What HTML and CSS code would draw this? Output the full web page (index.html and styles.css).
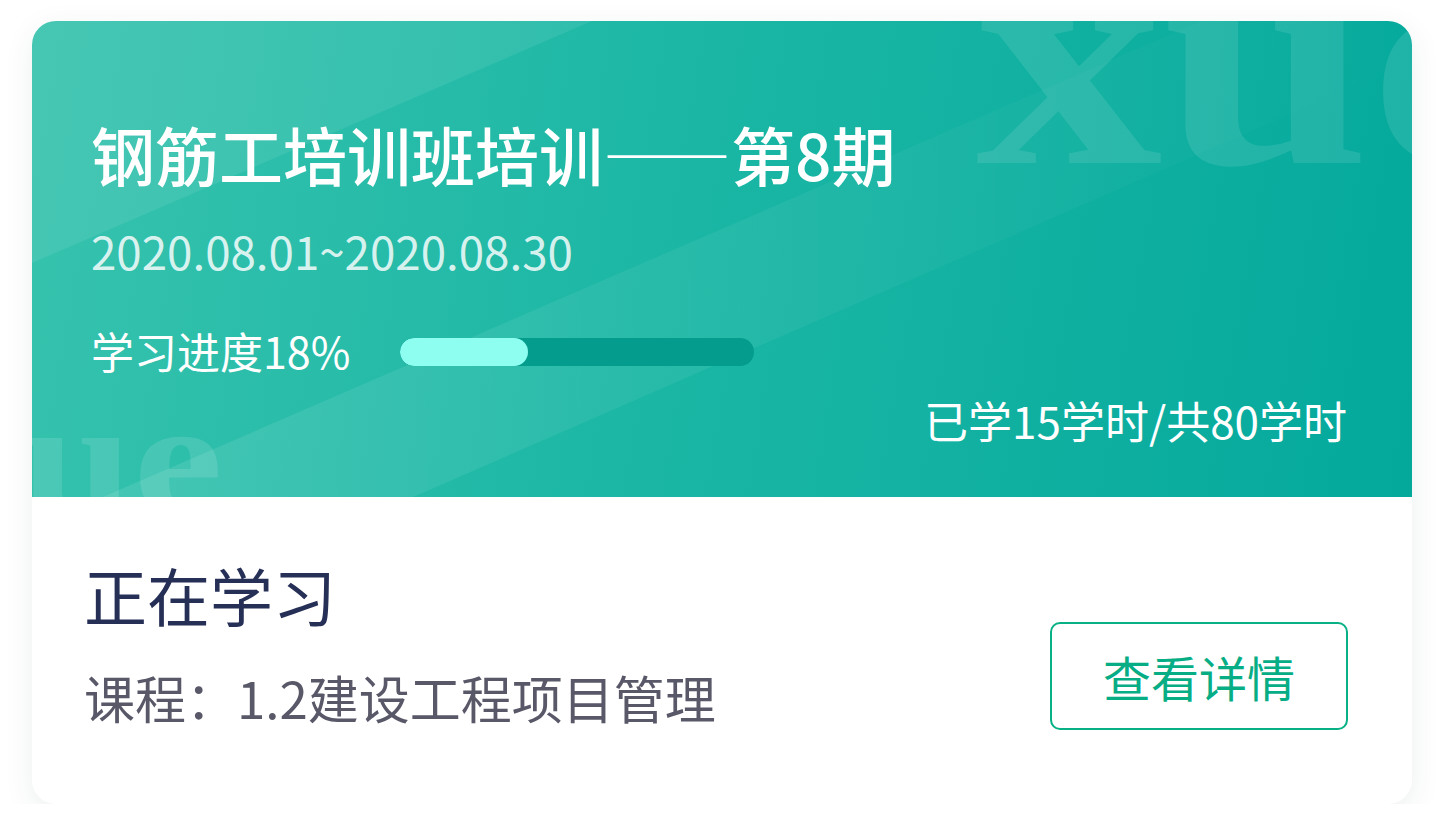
FILE: index.html
```html
<!DOCTYPE html>
<html lang="zh-CN">
<head>
<meta charset="utf-8">
<title>培训班</title>
<link rel="stylesheet" href="styles.css">
</head>
<body>
<div class="card">
  <div class="hero">
    <svg class="hero-bg" viewBox="0 0 1380 476" preserveAspectRatio="none" aria-hidden="true">
      <defs>
        <linearGradient id="band" x1="0" y1="0" x2="1" y2="0">
          <stop offset="0" stop-color="#ffffff" stop-opacity="0.1"/>
          <stop offset="0.5" stop-color="#ffffff" stop-opacity="0.05"/>
          <stop offset="1" stop-color="#ffffff" stop-opacity="0"/>
        </linearGradient>
      </defs>
      <polygon points="0,0 560,0 0,242" fill="#ffffff" fill-opacity="0.08"/>
      <polygon points="71,476 1170,0 1380,0 1380,40 381,476" fill="url(#band)"/>
      <text class="wm" x="944" y="142" font-size="311" textLength="560" lengthAdjust="spacingAndGlyphs" fill="#ffffff" fill-opacity="0.1">xue</text>
      <text class="wm" x="-112" y="494" font-size="167" textLength="303" lengthAdjust="spacingAndGlyphs" fill="#ffffff" fill-opacity="0.12">xue</text>
    </svg>
    <h1 class="title">钢筋工培训班培训——第8期</h1>
    <div class="date">2020.08.01~2020.08.30</div>
    <div class="progress-row">
      <span class="progress-label">学习进度18%</span>
      <div class="bar"><div class="bar-fill" style="width:36%"></div></div>
    </div>
    <div class="hours">已学15学时/共80学时</div>
  </div>
  <div class="info">
    <div class="info-text">
      <div class="status">正在学习</div>
      <div class="course">课程：1.2建设工程项目管理</div>
    </div>
    <button class="detail-btn" type="button">查看详情</button>
  </div>
</div>
</body>
</html>
```

FILE: styles.css
```css
* { box-sizing: border-box; }
html, body { margin: 0; padding: 0; background: #ffffff; }
body {
  font-family: "Noto Sans CJK SC", "Noto Sans", sans-serif;
  padding: 21px 30px 0 32px;
}
.card {
  width: 1380px;
  border-radius: 24px;
  overflow: hidden;
  background: #ffffff;
  box-shadow: 0 8px 30px rgba(30, 60, 60, 0.08);
}
.hero {
  position: relative;
  height: 476px;
  padding: 92px 65px 0 59px;
  background: linear-gradient(100deg, #37c3ae 0%, #1cb7a5 45%, #04a99c 100%);
  color: #ffffff;
}
.hero-bg {
  position: absolute;
  left: 0;
  top: 0;
  width: 100%;
  height: 100%;
}
.wm {
  font-family: "Liberation Serif", serif;
  font-weight: bold;
}
.title {
  position: relative;
  margin: 0;
  font-size: 64px;
  line-height: 80px;
  font-weight: 500;
}
.date {
  position: relative;
  margin-top: 29px;
  font-size: 45.7px;
  line-height: 56px;
  font-weight: 400;
  color: rgba(255, 255, 255, 0.82);
}
.progress-row {
  position: relative;
  margin-top: 44px;
  height: 56px;
  display: flex;
  align-items: center;
  gap: 50px;
}
.progress-label {
  font-size: 43px;
  line-height: 56px;
}
.bar {
  width: 354px;
  height: 28px;
  margin-top: 4px;
  border-radius: 14px;
  background: #049c8d;
  overflow: hidden;
}
.bar-fill {
  height: 100%;
  border-radius: 14px;
  background: #8efef1;
}
.hours {
  position: relative;
  margin-top: 14px;
  text-align: right;
  font-size: 44px;
  line-height: 56px;
}
.info {
  display: flex;
  justify-content: space-between;
  align-items: flex-end;
  padding: 57px 64px 75px 52px;
}
.status {
  font-size: 63px;
  line-height: 80px;
  color: #262f56;
}
.course {
  margin-top: 31px;
  font-size: 51px;
  line-height: 64px;
  color: #595868;
}
.detail-btn {
  width: 298px;
  height: 108px;
  margin-bottom: -1px;
  border: 2px solid #08b085;
  border-radius: 10px;
  background: #ffffff;
  color: #07ad85;
  font-family: "Noto Sans CJK SC", sans-serif;
  font-size: 48px;
  padding: 0;
}
```
